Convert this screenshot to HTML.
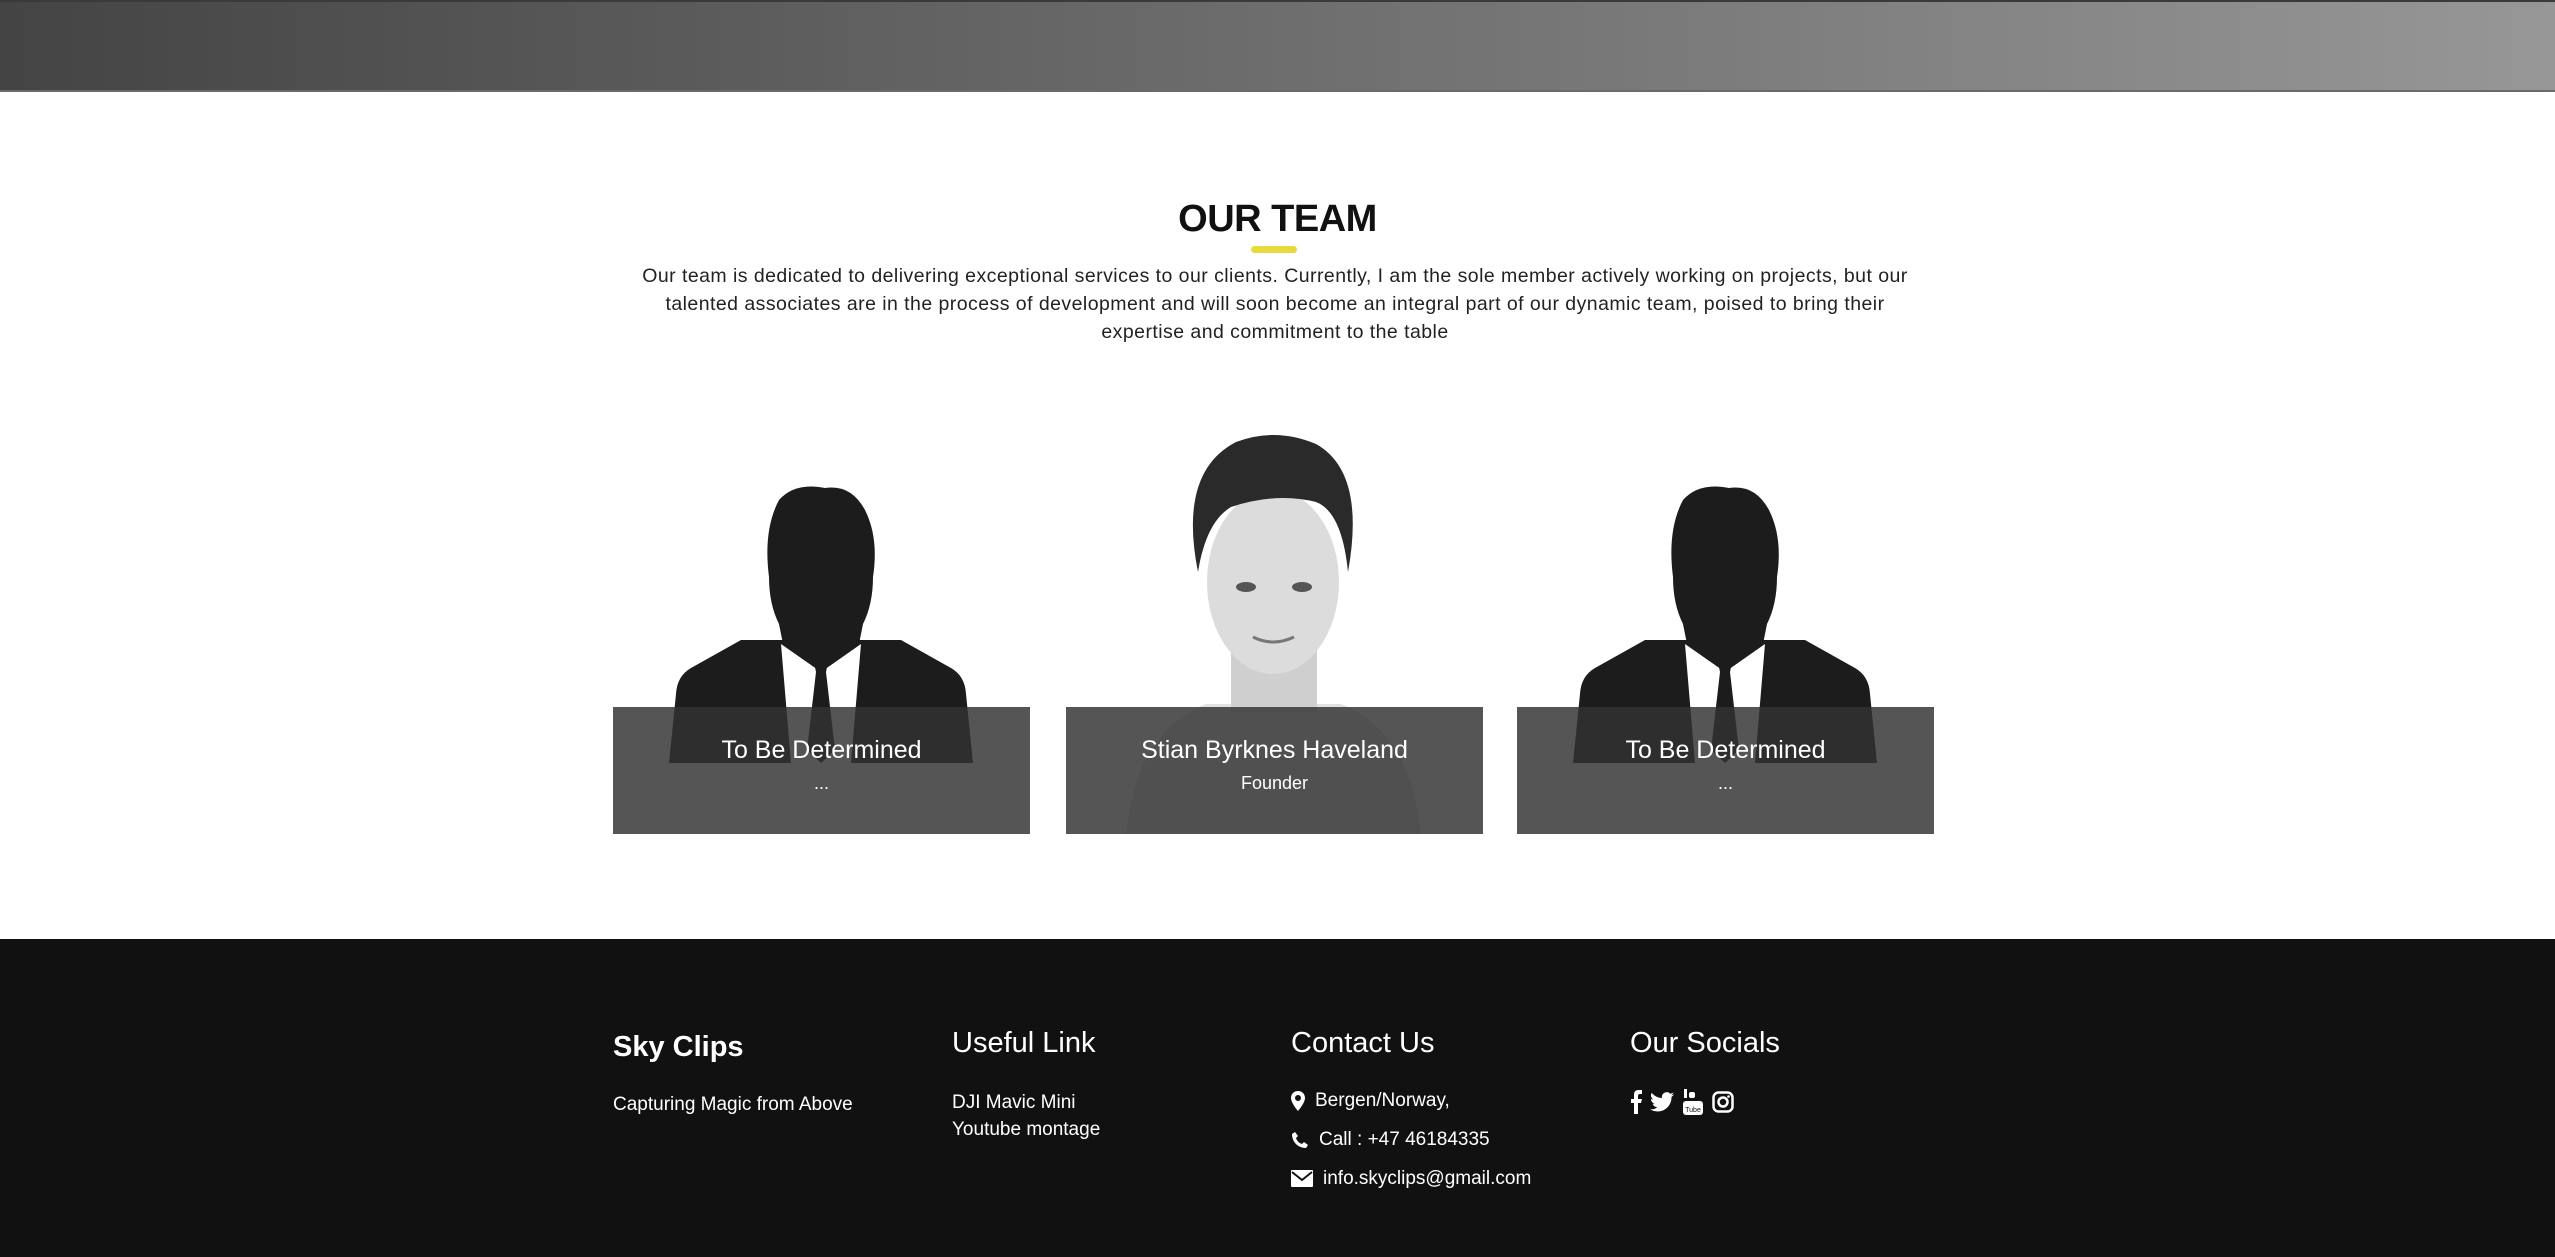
<!DOCTYPE html>
<html><head><meta charset="utf-8"><style>
*{margin:0;padding:0;box-sizing:border-box}
body{width:2555px;height:1257px;overflow:hidden;background:#fff;font-family:"Liberation Sans",sans-serif;position:relative}
.hdr{position:absolute;left:0;top:0;width:2555px;height:92px;background:linear-gradient(90deg,#444,#979797);border-top:2px solid #3a3a3a;border-bottom:2px solid #6a6a6a}
h1{position:absolute;left:0;width:2555px;top:198px;text-align:center;font-size:38px;font-weight:bold;color:#111;letter-spacing:-0.5px}
.bar{position:absolute;left:1251px;top:246px;width:46px;height:7px;border-radius:4px;background:#e8d93c}
.para{position:absolute;left:625px;width:1300px;top:262px;text-align:center;font-size:19.5px;letter-spacing:0.45px;line-height:28px;color:#222}
.card{position:absolute;top:432px;width:417px;height:402px;overflow:hidden}
.card svg{position:absolute;left:0;top:0}
.ov{position:absolute;left:0;top:275px;width:417px;height:127px;background:rgba(51,51,51,.83);color:#fff;text-align:center}
.nm{position:absolute;width:417px;text-align:center;color:#fff;font-size:25px}
.sb{position:absolute;width:417px;text-align:center;color:#fff;font-size:18px}
.ft{position:absolute;left:0;top:939px;width:2555px;height:318px;background:#111;color:#fff}
.col{position:absolute;top:88px}
.col h3{font-size:29px;font-weight:normal;height:40px}
.col p{font-size:19px;line-height:27px}
.ci{font-size:19px;display:flex;align-items:center;height:39px}
.ci svg{margin-right:10px}
</style></head><body>
<div class="hdr"></div>
<h1>OUR TEAM</h1>
<div class="bar"></div>
<div class="para">Our team is dedicated to delivering exceptional services to our clients. Currently, I am the sole member actively working on projects, but our talented associates are in the process of development and will soon become an integral part of our dynamic team, poised to bring their expertise and commitment to the table</div>

<div class="card" style="left:613px">
<svg width="417" height="402"><g fill="#1c1c1c">
<path d="M128 208 L288 208 L338 236 Q352 244 353 262 L360 331 L56 331 L63 262 Q64 244 78 236 Z"/>
<path d="M166 68 Q182 50 212 56 Q238 52 252 78 Q266 106 260 145 Q260 172 250 192 L246 212 L208 240 L170 212 L166 192 Q156 172 156 145 Q150 98 166 68 Z"/>
</g>
<polygon points="168,212 208,240 248,212 238,331 178,331" fill="#fff"/>
<polygon points="200,226 216,226 213,240 222,318 208,331 194,318 203,240" fill="#1c1c1c"/>
</svg>
<div class="ov"></div>
<div class="nm" style="top:304px">To Be Determined</div>
<div class="sb" style="top:341px">...</div>
</div>

<div class="card" style="left:1066px">
<svg width="417" height="402">
<path d="M60 402 Q70 300 140 272 L275 272 Q345 300 355 402 Z" fill="#e2e2e2"/>
<rect x="165" y="200" width="86" height="80" fill="#cfcfcf"/>
<ellipse cx="207" cy="150" rx="66" ry="92" fill="#dcdcdc"/>
<path d="M132 140 Q112 40 170 10 Q210 -5 250 12 Q300 40 282 140 Q276 80 250 70 Q210 60 165 75 Q140 90 132 140 Z" fill="#2a2a2a"/>
<ellipse cx="180" cy="155" rx="10" ry="5" fill="#555"/><ellipse cx="236" cy="155" rx="10" ry="5" fill="#555"/>
<path d="M187 205 Q207 215 228 205" stroke="#777" stroke-width="3" fill="none"/>
</svg>
<div class="ov"></div>
<div class="nm" style="top:304px">Stian Byrknes Haveland</div>
<div class="sb" style="top:341px">Founder</div>
</div>

<div class="card" style="left:1517px">
<svg width="417" height="402"><g fill="#1c1c1c">
<path d="M128 208 L288 208 L338 236 Q352 244 353 262 L360 331 L56 331 L63 262 Q64 244 78 236 Z"/>
<path d="M166 68 Q182 50 212 56 Q238 52 252 78 Q266 106 260 145 Q260 172 250 192 L246 212 L208 240 L170 212 L166 192 Q156 172 156 145 Q150 98 166 68 Z"/>
</g>
<polygon points="168,212 208,240 248,212 238,331 178,331" fill="#fff"/>
<polygon points="200,226 216,226 213,240 222,318 208,331 194,318 203,240" fill="#1c1c1c"/>
</svg>
<div class="ov"></div>
<div class="nm" style="top:304px">To Be Determined</div>
<div class="sb" style="top:341px">...</div>
</div>

<div class="ft">
<div class="col" style="left:613px"><h3 style="font-weight:bold;font-size:29px;margin-top:4px">Sky Clips</h3><p style="margin-top:20px">Capturing Magic from Above</p></div>
<div class="col" style="left:952px"><h3>Useful Link</h3><p style="margin-top:22px">DJI Mavic Mini<br>Youtube montage</p></div>
<div class="col" style="left:1291px"><h3>Contact Us</h3>
<div style="margin-top:14px">
<div class="ci"><svg width="14" height="20" viewBox="0 0 14 20"><path d="M7 0C3 0 0 3 0 7c0 5 7 13 7 13s7-8 7-13c0-4-3-7-7-7zm0 10a3 3 0 110-6 3 3 0 010 6z" fill="#fff"/></svg>Bergen/Norway,</div>
<div class="ci"><svg width="18" height="18" viewBox="0 0 18 18"><path d="M4 1l3 4-2 2c1 3 3 5 6 6l2-2 4 3-2 3C7 17 1 11 1 3z" fill="#fff"/></svg>Call : +47 46184335</div>
<div class="ci"><svg width="22" height="17" viewBox="0 0 22 17"><rect width="22" height="17" rx="1" fill="#fff"/><path d="M1 2l10 8 10-8" stroke="#111" stroke-width="2" fill="none"/></svg>info.skyclips@gmail.com</div>
</div></div>
<div class="col" style="left:1630px"><h3>Our Socials</h3>
<div style="margin-top:22px;display:flex;gap:8px;align-items:center">
<svg width="12" height="24" viewBox="0 0 12 24"><path d="M8 24V13h3l1-4H8V6c0-1 .5-2 2-2h2V0H9C5 0 4 2 4 5v4H1v4h3v11z" fill="#fff"/></svg>
<svg width="24" height="20" viewBox="0 0 24 20"><path d="M24 2.4c-.9.4-1.8.6-2.8.8 1-.6 1.800-1.6 2.2-2.7-1 .6-2 1-3.1 1.2A4.9 4.9 0 0012 6.1 14 14 0 011.7.9a4.9 4.9 0 001.5 6.6c-.8 0-1.6-.3-2.2-.6 0 2.4 1.7 4.4 3.9 4.8-.7.2-1.5.2-2.2.1.6 2 2.4 3.4 4.6 3.4A9.9 9.9 0 010 17.3 14 14 0 007.5 19.5c9 0 14-7.5 14-14v-.6c1-.7 1.8-1.6 2.5-2.5z" fill="#fff"/></svg>
<svg width="22" height="26" viewBox="0 0 22 26"><rect x="2" y="0" width="3" height="9" fill="#fff"/><rect x="7" y="3" width="6" height="6" rx="2" fill="#fff"/><rect x="1" y="12" width="20" height="14" rx="3" fill="#fff"/><text x="11" y="23" font-size="7" text-anchor="middle" fill="#111" font-family="Liberation Sans">Tube</text></svg>
<svg width="22" height="22" viewBox="0 0 22 22"><rect x="1.5" y="1.5" width="19" height="19" rx="5" stroke="#fff" stroke-width="2.5" fill="none"/><circle cx="11" cy="11" r="4.5" stroke="#fff" stroke-width="2.5" fill="none"/><circle cx="16.5" cy="5.5" r="1.3" fill="#fff"/></svg>
</div></div>
</div>
</body></html>
